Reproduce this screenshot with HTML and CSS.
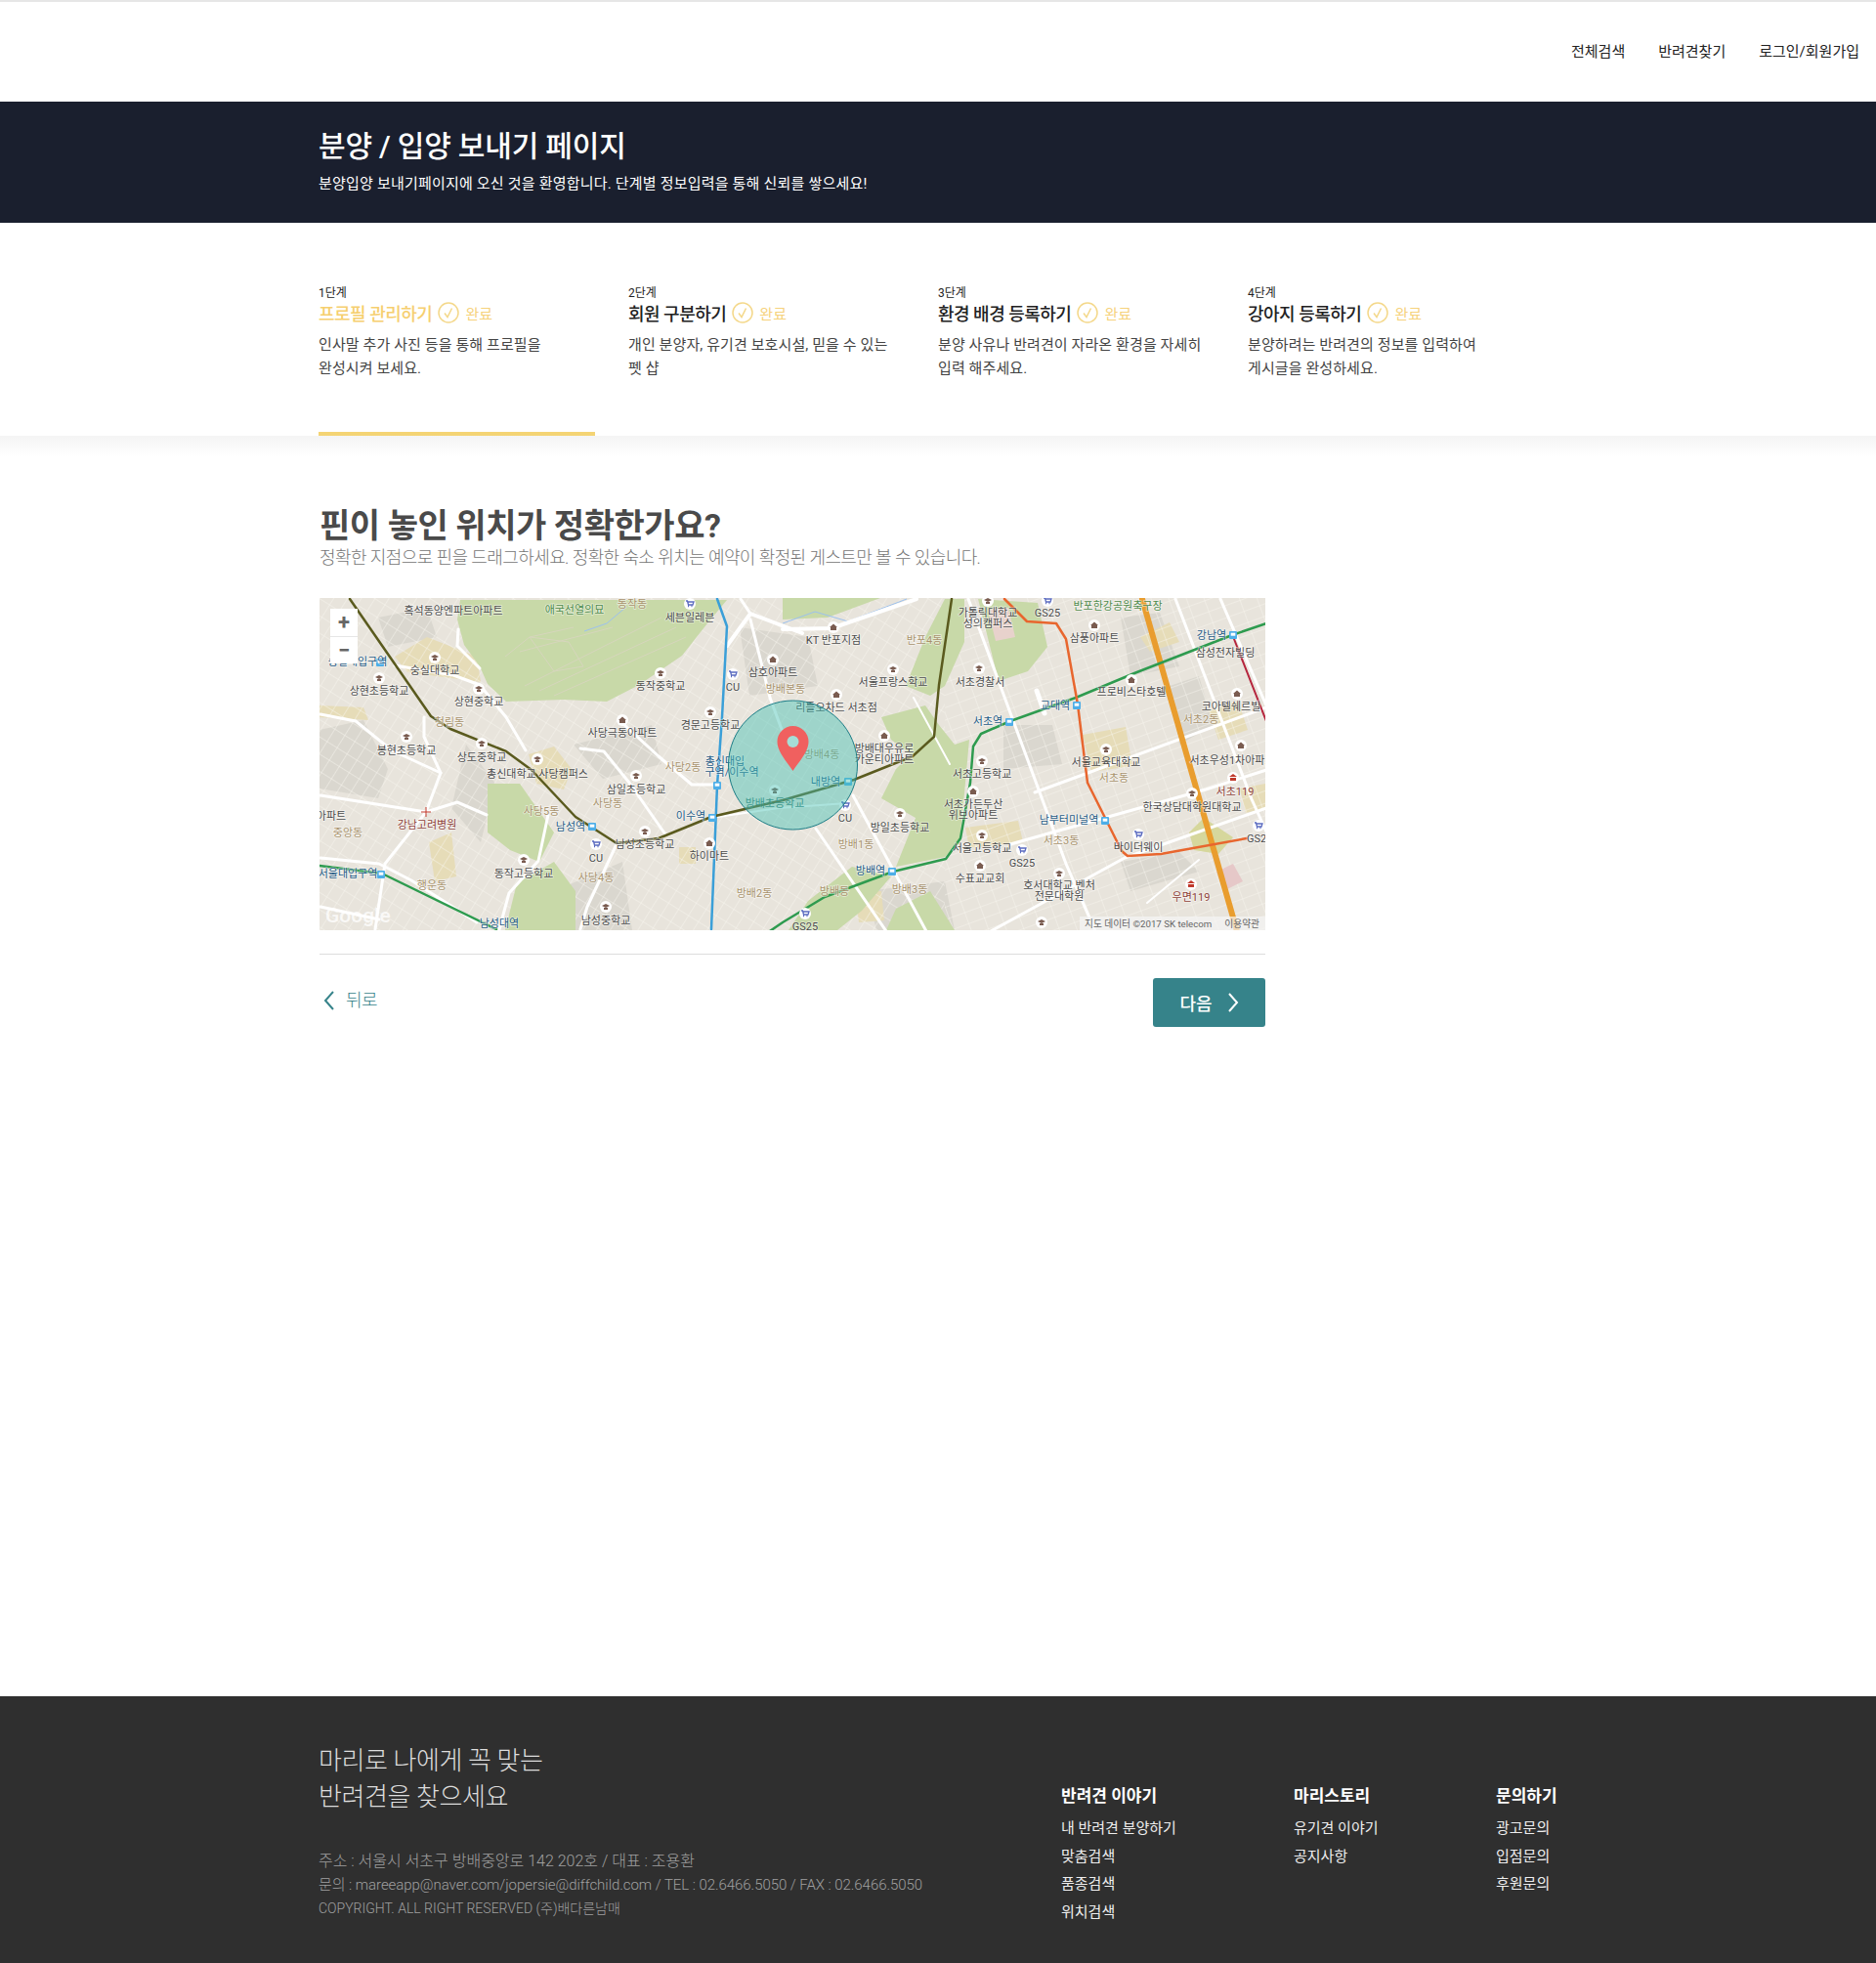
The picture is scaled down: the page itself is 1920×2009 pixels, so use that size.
FILE: index.html
```html
<!DOCTYPE html>
<html lang="ko">
<head>
    <meta charset="UTF-8">
    <meta name="viewport" content="width=device-width, initial-scale=1.0">
    <title>분양 / 입양 보내기 페이지</title>
    <link rel="stylesheet" href="styles.css">
</head>
<body>

    <header class="top-nav">
        <a href="#">전체검색</a>
        <a href="#">반려견찾기</a>
        <a href="#">로그인/회원가입</a>
    </header>

    <section class="banner">
        <h1>분양 / 입양 보내기 페이지</h1>
        <p>분양입양 보내기페이지에 오신 것을 환영합니다. 단계별 정보입력을 통해 신뢰를 쌓으세요!</p>
    </section>

    <section class="steps">
        <div class="step step-active">
            <span class="step-no">1단계</span>
            <div class="step-title">
                <strong>프로필 관리하기</strong>
                <svg class="check" viewBox="0 0 22 22"><circle cx="11" cy="11" r="10"/><path d="M7 11.5l3 4 4.500-9"/></svg>
                <span class="done">완료</span>
            </div>
            <p>인사말 추가 사진 등을 통해 프로필을 완성시켜 보세요.</p>
        </div>
        <div class="step">
            <span class="step-no">2단계</span>
            <div class="step-title">
                <strong>회원 구분하기</strong>
                <svg class="check" viewBox="0 0 22 22"><circle cx="11" cy="11" r="10"/><path d="M7 11.5l3 4 4.500-9"/></svg>
                <span class="done">완료</span>
            </div>
            <p>개인 분양자, 유기견 보호시설, 믿을 수 있는 펫 샵</p>
        </div>
        <div class="step">
            <span class="step-no">3단계</span>
            <div class="step-title">
                <strong>환경 배경 등록하기</strong>
                <svg class="check" viewBox="0 0 22 22"><circle cx="11" cy="11" r="10"/><path d="M7 11.5l3 4 4.500-9"/></svg>
                <span class="done">완료</span>
            </div>
            <p>분양 사유나 반려견이 자라온 환경을 자세히 입력 해주세요.</p>
        </div>
        <div class="step">
            <span class="step-no">4단계</span>
            <div class="step-title">
                <strong>강아지 등록하기</strong>
                <svg class="check" viewBox="0 0 22 22"><circle cx="11" cy="11" r="10"/><path d="M7 11.5l3 4 4.500-9"/></svg>
                <span class="done">완료</span>
            </div>
            <p>분양하려는 반려견의 정보를 입력하여 게시글을 완성하세요.</p>
        </div>
    </section>

    <main class="content">
        <h2>핀이 놓인 위치가 정확한가요?</h2>
        <p class="lead">정확한 지점으로 핀을 드래그하세요. 정확한 숙소 위치는 예약이 확정된 게스트만 볼 수 있습니다.</p>

        <div class="map">
            <svg class="map-svg" viewBox="0 0 968 340">
                <defs>
                    <pattern id="streets" width="17" height="12" patternUnits="userSpaceOnUse" patternTransform="rotate(-20)">
                        <path d="M0 0H17M0 0V12" stroke="#f9f7f1" stroke-width="0.9" fill="none"/>
                    </pattern>
                    <pattern id="streets-west" width="12" height="15" patternUnits="userSpaceOnUse" patternTransform="rotate(32)">
                        <path d="M0 0H12M0 0V15" stroke="#f9f7f1" stroke-width="0.9" fill="none"/>
                    </pattern>
                    <g id="school"><circle r="6" fill="#fff"/><path d="M-4-1l4-2 4 2-4 2zM-2 1v2h4V1z" fill="#7a5c50"/></g>
                    <g id="home"><circle r="6" fill="#fff"/><path d="M-4 0l4-3.500L4 0H3v3H-3V0z" fill="#7a5c50"/></g>
                    <g id="shop"><circle r="6" fill="#fff"/><path d="M-4-3h1.500l1 4H3l1-3H-2M-2 2.500h1M1.500 2.500h1" stroke="#5b6bc0" stroke-width="1.300" fill="none"/></g>
                    <g id="station"><rect x="-4" y="-4" width="8" height="8" rx="1" fill="#4daee8"/><rect x="-2.300" y="-2.300" width="4.600" height="3" fill="#fff"/></g>
                    <g id="fire"><circle r="6" fill="#fff"/><path d="M-4-1l4-3 4 3zM-3 0h6v3h-6z" fill="#c0392b"/></g>
                </defs>

                <rect width="968" height="340" fill="#e8e4dc"/>

                <g fill="#dad7cf">
                    <path d="M0 135L45 125 70 175 60 205 0 195z"/>
                    <path d="M150 150L180 190 165 250 135 215z"/>
                    <path d="M260 150L340 130 350 170 290 185z"/>
                    <path d="M820 20L860 15 880 70 830 80z"/>
                    <path d="M870 90L900 80 915 130 880 150z"/>
                    <path d="M700 130L750 130 760 170 700 175z"/>
                    <path d="M820 270L880 260 900 280 830 300z"/>
                    <path d="M560 300L640 290 650 340 570 340z"/>
                    <path d="M430 30L500 40 510 90 440 100z"/>
                    <path d="M240 300L310 270 320 340 240 340z"/>
                    <path d="M60 20L110 10 120 40 70 50z"/>
                </g>

                <g fill="#e6dcb8">
                    <path d="M77 60L110 40 161 60 165 86 90 76z"/>
                    <path d="M214 160L240 152 258 175 250 196 222 190z"/>
                    <path d="M781 140L825 132 832 172 790 178z"/>
                    <path d="M661 235L715 228 720 250 665 256z"/>
                    <path d="M0 110L45 112 50 125 0 122z"/>
                    <path d="M112 250L135 240 140 285 118 290z"/>
                    <path d="M910 115L940 105 950 135 920 145z"/>
                    <path d="M548 300L575 300 578 330 552 332z"/>
                    <path d="M840 40L870 25 880 45 850 55z"/>
                    <path d="M368 255L385 255 385 272 368 272z"/>
                    <path d="M942 195L968 190 968 215 948 220z"/>
                </g>

                <rect width="640" height="340" fill="url(#streets-west)"/>
                <rect x="640" width="328" height="340" fill="url(#streets)"/>

                <g fill="#c8d9a8">
                    <path d="M144 2L417 2 397 26 371 59 327 89 294 106 250 104 191 106 172 88 164 70 148 48 141 22z"/>
                    <path d="M172 190L205 190 240 240 225 270 195 258 172 240z"/>
                    <path d="M202 292L240 270 262 300 262 340 190 340z"/>
                    <path d="M575 122L620 110 634 130 650 150 665 145 660 200 655 250 640 265 590 275 610 225 575 205 590 175 605 160 585 145z"/>
                    <path d="M620 40L640 1 660 1 660 45 640 90 625 100 600 90z"/>
                    <path d="M674 1L735 5 745 50 725 75 695 85z"/>
                    <path d="M545 275L585 285 555 320 530 340 480 340 500 310z"/>
                    <path d="M474 0L574 0 520 20 474 22z"/>
                    <path d="M590 318L625 300 650 340 580 340z"/>
                </g>
                <path d="M890 240L905 225 935 245 920 262 895 258z" fill="#d6d79c"/>
                <path d="M918 280L935 272 945 290 925 300z" fill="#e6c8c8"/>
                <path d="M684 12L705 10 712 40 692 44z" fill="#e8d2cc"/>

                <g fill="none" stroke="#d6d6bc" stroke-width="1">
                    <path d="M210 90L350 20M225 95L365 30M240 100L375 40M205 55L300 30M215 40L240 75 270 70 255 45z"/>
                    <path d="M190 60L215 40 260 30"/>
                </g>
                <path d="M271 34L294 26 314 9M474 26L507 14 541 24 601 1" fill="none" stroke="#9cc1ee" stroke-width="1"/>

                <g fill="none" stroke="#fff" stroke-linecap="round" stroke-linejoin="round" stroke-width="3">
                    <path d="M664 1L764 272 794 341"/>
                    <path d="M876 1L954 206 969 239"/>
                    <path d="M922 1L969 110"/>
                    <path d="M687 341L824 266 969 215"/>
                    <path d="M732 199L969 112"/>
                    <path d="M707 252L907 196 969 176"/>
                    <path d="M474 32L524 31 611 1" stroke-width="4"/>
                    <path d="M546 202L621 341"/>
                    <path d="M417 49L441 16 494 36" stroke-width="4"/>
                    <path d="M441 16L431 1M441 22L461 102 475 140"/>
                    <path d="M1 119L37 126 74 156 124 179"/>
                    <path d="M1 202L109 219 141 209 171 222"/>
                    <path d="M109 219L124 179 107 142 107 122"/>
                    <path d="M109 219L67 272 57 339"/>
                    <path d="M1 266L61 272 94 289 161 332"/>
                    <path d="M1 316L61 329"/>
                    <path d="M77 69L137 79 164 89 191 122 211 156"/>
                    <path d="M142 32L141 49 164 72"/>
                    <path d="M267 154L291 157 317 189 354 242"/>
                    <path d="M311 129L347 162 381 191 407 191"/>
                    <path d="M304 252L274 316 267 339"/>
                    <path d="M234 222L224 269 194 302 184 339"/>
                    <path d="M608 102L645 170" stroke-width="2"/>
                    <path d="M734 95L742 118" stroke-width="5"/>
                    <path d="M401 225L470 215 540 210" stroke-width="2"/>
                    <path d="M508 236L580 341"/>
                    <path d="M847 312L900 268" stroke-width="2"/>
                </g>

                <g fill="none" stroke-linejoin="round" stroke-linecap="round">
                    <path d="M842 1L939 341" stroke="#e99d2e" stroke-width="6"/>
                    <path d="M936 42L969 126" stroke="#b5263e" stroke-width="2"/>
                    <path d="M407 1L417 29 412 122 407 192 401 339" stroke="#3a9fd8" stroke-width="2.500"/>
                    <path d="M31 1L114 121 134 134 191 157 217 176 262 224 304 251 347 246 401 224 474 207 547 186 607 162 629 142 634 89 647 1" stroke="#5a5a1e" stroke-width="2.500"/>
                    <path d="M969 26L934 38 834 77 774 102 707 126 677 139 669 152 666 189 656 246 641 267 587 280 517 306 474 332 455 345" stroke="#2e9b4f" stroke-width="2.500"/>
                    <path d="M0 274L64 282 181 339" stroke="#2e9b4f" stroke-width="2.500"/>
                    <path d="M701 1L724 24 754 26 764 42 776 109 786 189 821 259 827 264 861 262 949 246" stroke="#e8662e" stroke-width="2.500"/>
                </g>

                <use href="#station" x="62" y="66"/><use href="#station" x="279" y="234"/>
                <use href="#station" x="63" y="283"/><use href="#station" x="402" y="225"/>
                <use href="#station" x="407" y="192"/><use href="#station" x="541" y="188"/>
                <use href="#station" x="706" y="127"/><use href="#station" x="775" y="110"/>
                <use href="#station" x="935" y="38"/><use href="#station" x="804" y="228"/>
                <use href="#station" x="586" y="280"/>

                <use href="#school" x="118" y="61"/><use href="#school" x="61" y="82"/>
                <use href="#school" x="163" y="93"/><use href="#school" x="349" y="77"/>
                <use href="#school" x="400" y="117"/><use href="#school" x="89" y="142"/>
                <use href="#school" x="166" y="149"/><use href="#school" x="223" y="165"/>
                <use href="#school" x="324" y="182"/><use href="#school" x="333" y="239"/>
                <use href="#school" x="209" y="268"/><use href="#school" x="293" y="316"/>
                <use href="#school" x="587" y="73"/><use href="#school" x="678" y="167"/>
                <use href="#school" x="805" y="155"/><use href="#school" x="594" y="221"/>
                <use href="#school" x="678" y="243"/><use href="#school" x="757" y="282"/>
                <use href="#school" x="893" y="200"/><use href="#school" x="739" y="332"/>
                <use href="#school" x="675" y="72"/><use href="#school" x="684" y="3"/>
                <use href="#school" x="466" y="197"/>

                <use href="#home" x="464" y="63"/><use href="#home" x="310" y="125"/>
                <use href="#home" x="793" y="28"/><use href="#home" x="578" y="141"/>
                <use href="#home" x="669" y="198"/><use href="#home" x="943" y="151"/>
                <use href="#home" x="529" y="99"/><use href="#home" x="676" y="274"/>
                <use href="#home" x="831" y="84"/><use href="#home" x="939" y="98"/>
                <use href="#home" x="526" y="30"/><use href="#home" x="399" y="251"/>

                <use href="#shop" x="379" y="6"/><use href="#shop" x="423" y="78"/>
                <use href="#shop" x="283" y="252"/><use href="#shop" x="538" y="212"/>
                <use href="#shop" x="745" y="3"/><use href="#shop" x="719" y="258"/>
                <use href="#shop" x="838" y="242"/><use href="#shop" x="961" y="233"/>
                <use href="#shop" x="497" y="323"/>

                <use href="#fire" x="935" y="184"/><use href="#fire" x="892" y="293"/>
                <path d="M104 219h10M109 214v10" stroke="#c0392b" stroke-width="1"/>

                <g class="lb">
                    <text x="137" y="17">흑석동양엔파트아파트</text>
                    <text x="379" y="24">세븐일레븐</text>
                    <text x="118" y="78">숭실대학교</text>
                    <text x="61" y="99">상현초등학교</text>
                    <text x="163" y="110">상현중학교</text>
                    <text x="349" y="94">동작중학교</text>
                    <text x="464" y="80">삼호아파트</text>
                    <text x="423" y="95">CU</text>
                    <text x="400" y="134">경문고등학교</text>
                    <text x="310" y="142">사당극동아파트</text>
                    <text x="89" y="160">봉현초등학교</text>
                    <text x="166" y="167">상도중학교</text>
                    <text x="223" y="184">총신대학교 사당캠퍼스</text>
                    <text x="324" y="200">삼일초등학교</text>
                    <text x="12" y="227">아파트</text>
                    <text x="283" y="270">CU</text>
                    <text x="333" y="256">남성초등학교</text>
                    <text x="399" y="268">하이마트</text>
                    <text x="209" y="286">동작고등학교</text>
                    <text x="293" y="334">남성중학교</text>
                    <text x="526" y="47">KT 반포지점</text>
                    <text x="587" y="90">서울프랑스학교</text>
                    <text x="684" y="19">가톨릭대학교</text>
                    <text x="684" y="30">성의캠퍼스</text>
                    <text x="745" y="19">GS25</text>
                    <text x="793" y="45">삼풍아파트</text>
                    <text x="676" y="90">서초경찰서</text>
                    <text x="529" y="116">리틀오차드 서초점</text>
                    <text x="831" y="100">프로비스타호텔</text>
                    <text x="927" y="60">삼성전자빌딩</text>
                    <text x="933" y="115">코아텔쉐르빌</text>
                    <text x="578" y="158">방배대우유로</text>
                    <text x="578" y="169">카운티아파트</text>
                    <text x="678" y="184">서초고등학교</text>
                    <text x="805" y="172">서울교육대학교</text>
                    <text x="934" y="170">서초우성1차아파트</text>
                    <text x="669" y="215">서초가든두산</text>
                    <text x="669" y="226">위브아파트</text>
                    <text x="893" y="218">한국상담대학원대학교</text>
                    <text x="538" y="229">CU</text>
                    <text x="594" y="239">방일초등학교</text>
                    <text x="678" y="260">서울고등학교</text>
                    <text x="838" y="259">바이더웨이</text>
                    <text x="719" y="275">GS25</text>
                    <text x="959" y="250">GS2</text>
                    <text x="676" y="291">수표교교회</text>
                    <text x="757" y="298">호서대학교 벤처</text>
                    <text x="757" y="309">전문대학원</text>
                    <text x="497" y="340">GS25</text>
                </g>
                <g class="lb lb-area">
                    <text x="320" y="10">동작동</text>
                    <text x="477" y="97">방배본동</text>
                    <text x="133" y="131">청림동</text>
                    <text x="372" y="177">사당2동</text>
                    <text x="295" y="214">사당동</text>
                    <text x="227" y="222">사당5동</text>
                    <text x="29" y="244">중앙동</text>
                    <text x="283" y="290">사당4동</text>
                    <text x="115" y="298">행운동</text>
                    <text x="445" y="306">방배2동</text>
                    <text x="619" y="47">반포4동</text>
                    <text x="902" y="128">서초2동</text>
                    <text x="514" y="164">방배4동</text>
                    <text x="813" y="188">서초동</text>
                    <text x="759" y="252">서초3동</text>
                    <text x="549" y="256">방배1동</text>
                    <text x="604" y="302">방배3동</text>
                    <text x="527" y="304">방배동</text>
                </g>
                <g class="lb lb-subway">
                    <text x="39" y="69">숭실대입구역</text>
                    <text x="415" y="171">총신대입</text>
                    <text x="422" y="182">구역/이수역</text>
                    <text x="380" y="227">이수역</text>
                    <text x="257" y="238">남성역</text>
                    <text x="29" y="286">서울대입구역</text>
                    <text x="184" y="337">남성대역</text>
                    <text x="753" y="114">교대역</text>
                    <text x="684" y="130">서초역</text>
                    <text x="913" y="42">강남역</text>
                    <text x="518" y="192">내방역</text>
                    <text x="767" y="231">남부터미널역</text>
                    <text x="564" y="283">방배역</text>
                </g>
                <g class="lb lb-green">
                    <text x="261" y="16">애국선열의묘</text>
                    <text x="817" y="12">반포한강공원축구장</text>
                </g>
                <g class="lb lb-red">
                    <text x="110" y="236">강남고려병원</text>
                    <text x="937" y="202">서초119</text>
                    <text x="892" y="310">우면119</text>
                </g>
                <text class="lb-on-circle" x="466" y="214">방배초등학교</text>

                <circle cx="484.500" cy="171" r="66" fill="#45c0b4" fill-opacity=".45" stroke="#1c7c86" stroke-width="1"/>
                <path d="M484.500 177C477 166 468.500 157 468.500 147a16 16 0 0 1 32 0C500.500 157 492 166 484.500 177z" fill="#f0605f"/>
                <circle cx="484.500" cy="147" r="6" fill="#a5ded6"/>

                <text class="google" x="6" y="332">Google</text>
            </svg>

            <div class="zoom-ctrl">
                <button type="button">+</button>
                <button type="button">−</button>
            </div>
            <div class="map-credit">
                <span>지도 데이터 ©2017 SK telecom</span>
                <span>이용약관</span>
            </div>
        </div>

        <div class="form-nav">
            <a class="btn-back" href="#">
                <svg viewBox="0 0 11 20"><path d="M10 1L2 10l8 9"/></svg>
                뒤로
            </a>
            <a class="btn-next" href="#">
                다음
                <svg viewBox="0 0 11 20"><path d="M1 1l8 9-8 9"/></svg>
            </a>
        </div>
    </main>

    <footer class="site-footer">
        <div class="footer-info">
            <p class="slogan">마리로 나에게 꼭 맞는<br>반려견을 찾으세요</p>
            <p class="addr">주소 : 서울시 서초구 방배중앙로 142 202호 / 대표 : 조용환</p>
            <p class="contact">문의 : mareeapp@naver.com/jopersie@diffchild.com / TEL : 02.6466.5050 / FAX : 02.6466.5050</p>
            <p class="copy">COPYRIGHT. ALL RIGHT RESERVED (주)배다른남매</p>
        </div>
        <div class="footer-links">
            <div class="f-col f-col-1">
                <h4>반려견 이야기</h4>
                <a href="#">내 반려견 분양하기</a>
                <a href="#">맞춤검색</a>
                <a href="#">품종검색</a>
                <a href="#">위치검색</a>
            </div>
            <div class="f-col f-col-2">
                <h4>마리스토리</h4>
                <a href="#">유기견 이야기</a>
                <a href="#">공지사항</a>
            </div>
            <div class="f-col">
                <h4>문의하기</h4>
                <a href="#">광고문의</a>
                <a href="#">입점문의</a>
                <a href="#">후원문의</a>
            </div>
        </div>
    </footer>

</body>
</html>
```

FILE: styles.css
```css
* {
    box-sizing: border-box;
}

html, body {
    margin: 0;
    padding: 0;
}

body {
    font-family: "Roboto", "Noto Sans CJK KR", sans-serif;
    color: #333333;
    background-color: #ffffff;
    min-height: 2009px;
    display: flex;
    flex-direction: column;
}

a {
    color: inherit;
    text-decoration: none;
}

.top-nav {
    height: 104px;
    border-top: 2px solid #e6e6e6;
    display: flex;
    justify-content: flex-end;
    align-items: center;
    gap: 34px;
    padding: 0 17px 4px 0;
    font-size: 15px;
    color: #222222;
}

.banner {
    height: 124px;
    background-color: #1a1f2e;
    color: #ffffff;
    padding: 24px 0 0 326px;
}

.banner h1 {
    margin: 0;
    font-size: 30px;
    font-weight: 500;
    line-height: 44px;
    letter-spacing: -0.2px;
}

.banner p {
    margin: 0;
    font-size: 15px;
    line-height: 32px;
    letter-spacing: 0.2px;
}

.steps {
    height: 218px;
    padding: 62px 0 0 326px;
    display: flex;
    gap: 34px;
    position: relative;
}

.steps::after {
    content: "";
    position: absolute;
    left: 0;
    right: 0;
    top: 100%;
    height: 22px;
    background: linear-gradient(#f4f4f4, #ffffff);
}

.step {
    width: 283px;
    height: 156px;
    border-bottom: 4px solid transparent;
}

.step-active {
    border-bottom-color: #f4d474;
}

.step-no {
    display: block;
    font-size: 12px;
    line-height: 20px;
    color: #222222;
}

.step-title {
    display: flex;
    align-items: center;
    gap: 6px;
    height: 24px;
    margin-top: -2px;
}

.step-title strong {
    font-size: 18px;
    font-weight: 500;
    letter-spacing: -0.5px;
    color: #222222;
}

.step-active .step-title strong {
    color: #f6cf6f;
}

.check {
    width: 22px;
    height: 22px;
    fill: none;
    stroke: #f4d88a;
    stroke-width: 1.5;
}

.done {
    font-size: 15px;
    color: #f6d27c;
}

.step p {
    margin: 9px 0 0;
    font-size: 15px;
    line-height: 24px;
    letter-spacing: 0.1px;
    word-break: keep-all;
    color: #444444;
}

.content {
    flex: 1;
    width: 968px;
    margin-left: 327px;
    padding-top: 69px;
}

.content h2 {
    margin: 0;
    font-size: 34px;
    font-weight: 700;
    line-height: 46px;
    letter-spacing: -0.45px;
    color: #4a4a4a;
}

.lead {
    margin: 0;
    font-size: 18px;
    font-weight: 300;
    line-height: 20px;
    letter-spacing: -0.58px;
    color: #757575;
}

.map {
    position: relative;
    height: 340px;
    margin-top: 31px;
    overflow: hidden;
}

.map-svg {
    display: block;
    width: 968px;
    height: 340px;
}

.lb text {
    font-size: 11px;
    fill: #4a4a4a;
    text-anchor: middle;
    stroke: rgba(255, 255, 255, 0.55);
    stroke-width: 1.5px;
    paint-order: stroke;
}

.lb-area text {
    fill: #a8926c;
}

.lb-subway text {
    fill: #1d5a86;
}

.lb-green text {
    fill: #4e8a4a;
}

.lb-red text {
    fill: #8e3f38;
}

.lb-on-circle {
    font-size: 11px;
    fill: #3c7a72;
    text-anchor: middle;
}

.google {
    font-size: 21px;
    font-weight: 500;
    fill: #ffffff;
    fill-opacity: 0.75;
}

.zoom-ctrl {
    position: absolute;
    left: 11px;
    top: 11px;
    width: 28px;
    background-color: #ffffff;
}

.zoom-ctrl button {
    display: block;
    width: 28px;
    height: 28px;
    border: none;
    background: none;
    padding: 0;
    font-family: "Roboto", sans-serif;
    font-size: 22px;
    font-weight: 700;
    line-height: 24px;
    color: #666666;
}

.zoom-ctrl button + button {
    border-top: 1px solid #e6e6e6;
}

.map-credit {
    position: absolute;
    right: 0;
    bottom: 0;
    display: flex;
    gap: 13px;
    padding: 0 6px 0 5px;
    height: 14px;
    align-items: center;
    background-color: rgba(245, 245, 245, 0.7);
    font-size: 9.7px;
    color: #666666;
}

.form-nav {
    margin-top: 24px;
    padding-top: 24px;
    border-top: 1px solid #dddddd;
    display: flex;
    justify-content: space-between;
    align-items: flex-start;
}

.btn-back {
    display: flex;
    align-items: center;
    gap: 12px;
    margin: 7px 0 0 4px;
    font-size: 18px;
    font-weight: 300;
    line-height: 32px;
    letter-spacing: -0.5px;
    color: #36838a;
}

.btn-back svg,
.btn-next svg {
    width: 11px;
    height: 20px;
    fill: none;
    stroke: currentColor;
    stroke-width: 2;
}

.btn-next {
    width: 115px;
    height: 50px;
    display: flex;
    align-items: center;
    justify-content: center;
    gap: 16px;
    border-radius: 3px;
    background-color: #36838a;
    color: #ffffff;
    font-size: 18px;
    font-weight: 500;
}

.site-footer {
    height: 273px;
    background-color: #2f2f2f;
    padding: 46px 0 0 326px;
    display: flex;
}

.footer-info {
    width: 760px;
}

.footer-info p {
    margin: 0;
}

.footer-info .slogan {
    margin-top: 2px;
    font-size: 26px;
    font-weight: 300;
    line-height: 37px;
    letter-spacing: -0.4px;
    color: #dddddd;
}

.footer-info .addr {
    margin-top: 35px;
    font-size: 16px;
    font-weight: 300;
    line-height: 24px;
    color: #a0a0a0;
}

.contact {
    font-size: 15px;
    font-weight: 300;
    line-height: 24px;
    letter-spacing: -0.05px;
    color: #a0a0a0;
}

.copy {
    font-size: 14px;
    font-weight: 300;
    line-height: 24px;
    color: #a0a0a0;
}

.footer-links {
    display: flex;
    padding-top: 42px;
}

.f-col {
    display: flex;
    flex-direction: column;
    color: #eeeeee;
    font-size: 15px;
    line-height: 28.5px;
}

.f-col-1 {
    width: 238px;
}

.f-col-2 {
    width: 207px;
}

.f-col h4 {
    margin: 0 0 5px;
    font-size: 17px;
    font-weight: 700;
    line-height: 28px;
    color: #ffffff;
}
```
